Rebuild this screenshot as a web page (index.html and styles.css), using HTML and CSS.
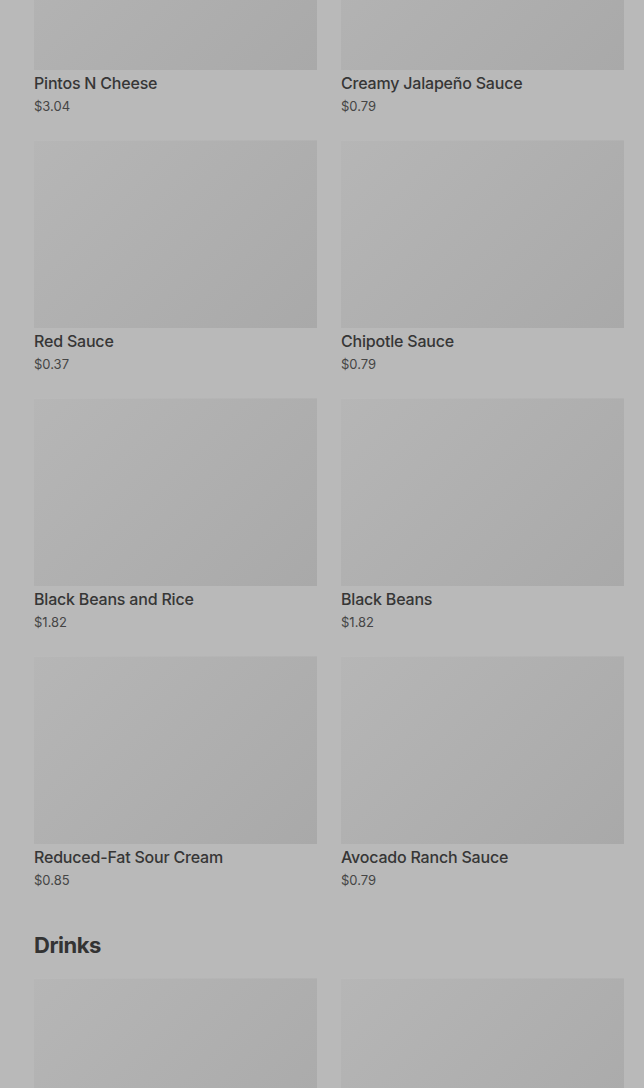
FILE: index.html
```html
<!DOCTYPE html>
<html lang="en">
<head>
<meta charset="utf-8">
<title>Menu</title>
<link rel="stylesheet" href="styles.css">
</head>
<body>
<main class="page">
  <section class="section section-first">
    <div class="grid">
      <article class="card"><div class="thumb"></div><h3 class="name">Pintos N Cheese</h3><p class="price">$3.04</p></article>
      <article class="card"><div class="thumb"></div><h3 class="name">Creamy Jalapeño Sauce</h3><p class="price">$0.79</p></article>
      <article class="card"><div class="thumb"></div><h3 class="name">Red Sauce</h3><p class="price">$0.37</p></article>
      <article class="card"><div class="thumb"></div><h3 class="name">Chipotle Sauce</h3><p class="price">$0.79</p></article>
      <article class="card"><div class="thumb"></div><h3 class="name">Black Beans and Rice</h3><p class="price">$1.82</p></article>
      <article class="card"><div class="thumb"></div><h3 class="name">Black Beans</h3><p class="price">$1.82</p></article>
      <article class="card"><div class="thumb"></div><h3 class="name">Reduced-Fat Sour Cream</h3><p class="price">$0.85</p></article>
      <article class="card"><div class="thumb"></div><h3 class="name">Avocado Ranch Sauce</h3><p class="price">$0.79</p></article>
    </div>
  </section>
  <section class="section">
    <h2 class="heading">Drinks</h2>
    <div class="grid">
      <article class="card"><div class="thumb"></div></article>
      <article class="card"><div class="thumb"></div></article>
    </div>
  </section>
</main>
</body>
</html>
```
FILE: styles.css
```css
html, body {
  margin: 0;
  padding: 0;
  background: #b9b9b9;
  height: 1088px;
  overflow: hidden;
}
body {
  font-family: Inter, "Noto Sans", Roboto, sans-serif;
  color: #333333;
}
.page {
  padding: 0 20px 0 34px;
}
.section-first {
  margin-top: -118px;
}
.grid {
  display: grid;
  grid-template-columns: 283px 283px;
  column-gap: 24px;
  row-gap: 24px;
}
.card {
  display: flex;
  flex-direction: column;
}
.thumb {
  height: 188px;
  background: linear-gradient(135deg, #b6b6b6 0%, #b0b0b0 45%, #a9a9a9 100%);
  box-shadow: inset 0 1px 0 rgba(255,255,255,0.06);
}
.name {
  margin: 3px 0 0;
  font-size: 16px;
  line-height: 20px;
  font-weight: 500;
  color: #363636;
  letter-spacing: -0.2px;
}
.price {
  margin: 3px 0 0;
  font-size: 13px;
  line-height: 20px;
  font-weight: 400;
  color: #454545;
}
.heading {
  margin: 41px 0 19px;
  font-size: 22px;
  line-height: 28px;
  font-weight: 700;
  letter-spacing: -0.5px;
  color: #333333;
}
```
